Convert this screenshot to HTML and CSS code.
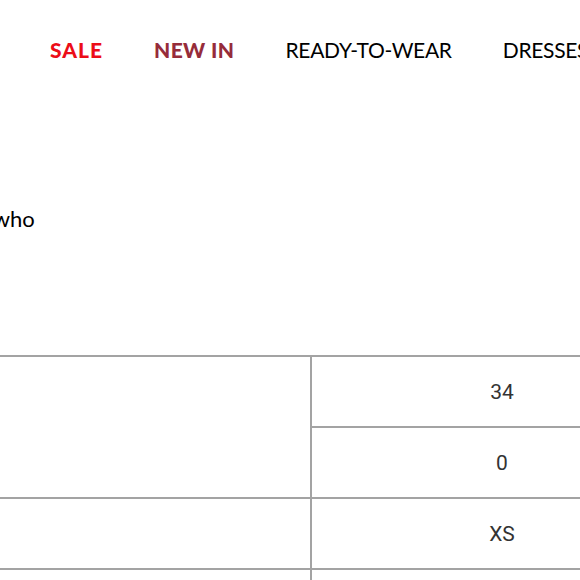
FILE: index.html
```html
<!DOCTYPE html>
<html>
<head>
<meta charset="utf-8">
<link rel="stylesheet" href="styles.css">
</head>
<body>
<div class="page">
  <nav class="nav">
    <a class="nav-item sale">SALE</a>
    <a class="nav-item new">NEW IN</a>
    <a class="nav-item plain">READY-TO-WEAR</a>
    <a class="nav-item plain">DRESSES</a>
  </nav>
  <p class="intro"><span class="clip">women who</span></p>
  <table class="sizes">
    <colgroup>
      <col class="col-label">
      <col class="col-val">
    </colgroup>
    <tr>
      <td class="label" rowspan="2"></td>
      <td class="val">34</td>
    </tr>
    <tr>
      <td class="val">0</td>
    </tr>
    <tr>
      <td class="label"></td>
      <td class="val">XS</td>
    </tr>
    <tr>
      <td class="label"></td>
      <td class="val">&nbsp;</td>
    </tr>
  </table>
</div>
</body>
</html>
```

FILE: styles.css
```css
html, body {
  margin: 0;
  padding: 0;
  background: #fff;
  overflow: hidden;
  width: 580px;
  height: 580px;
}
.page {
  width: 580px;
  font-family: Lato, "Liberation Sans", sans-serif;
}
.nav {
  display: flex;
  gap: 51px;
  padding: 37px 0 0 50px;
  height: 26px;
  white-space: nowrap;
  font-size: 21px;
  line-height: 26px;
  color: #000;
}
.nav-item {
  flex: none;
}
.plain {
  letter-spacing: -0.3px;
}
.sale {
  color: #ec0d18;
  font-weight: 900;
  letter-spacing: 1px;
}
.new {
  color: #962c3a;
  font-weight: 900;
  letter-spacing: 0.4px;
}
.intro {
  margin: 141px 0 0 0;
  height: 30px;
  font-size: 22px;
  line-height: 30px;
  color: #000;
  white-space: nowrap;
}
.clip {
  display: inline-block;
  margin-left: -84px;
}
.sizes {
  margin: 121px 0 0 -60px;
  width: 752px;
  table-layout: fixed;
  border-collapse: collapse;
  font-family: Roboto, "Liberation Sans", sans-serif;
  font-size: 21px;
  color: #333;
}
.col-label {
  width: 370px;
}
.col-val {
  width: 382px;
}
.sizes td {
  border: 2px solid #a3a3a3;
  height: 69px;
  padding: 0;
  text-align: center;
}
```
